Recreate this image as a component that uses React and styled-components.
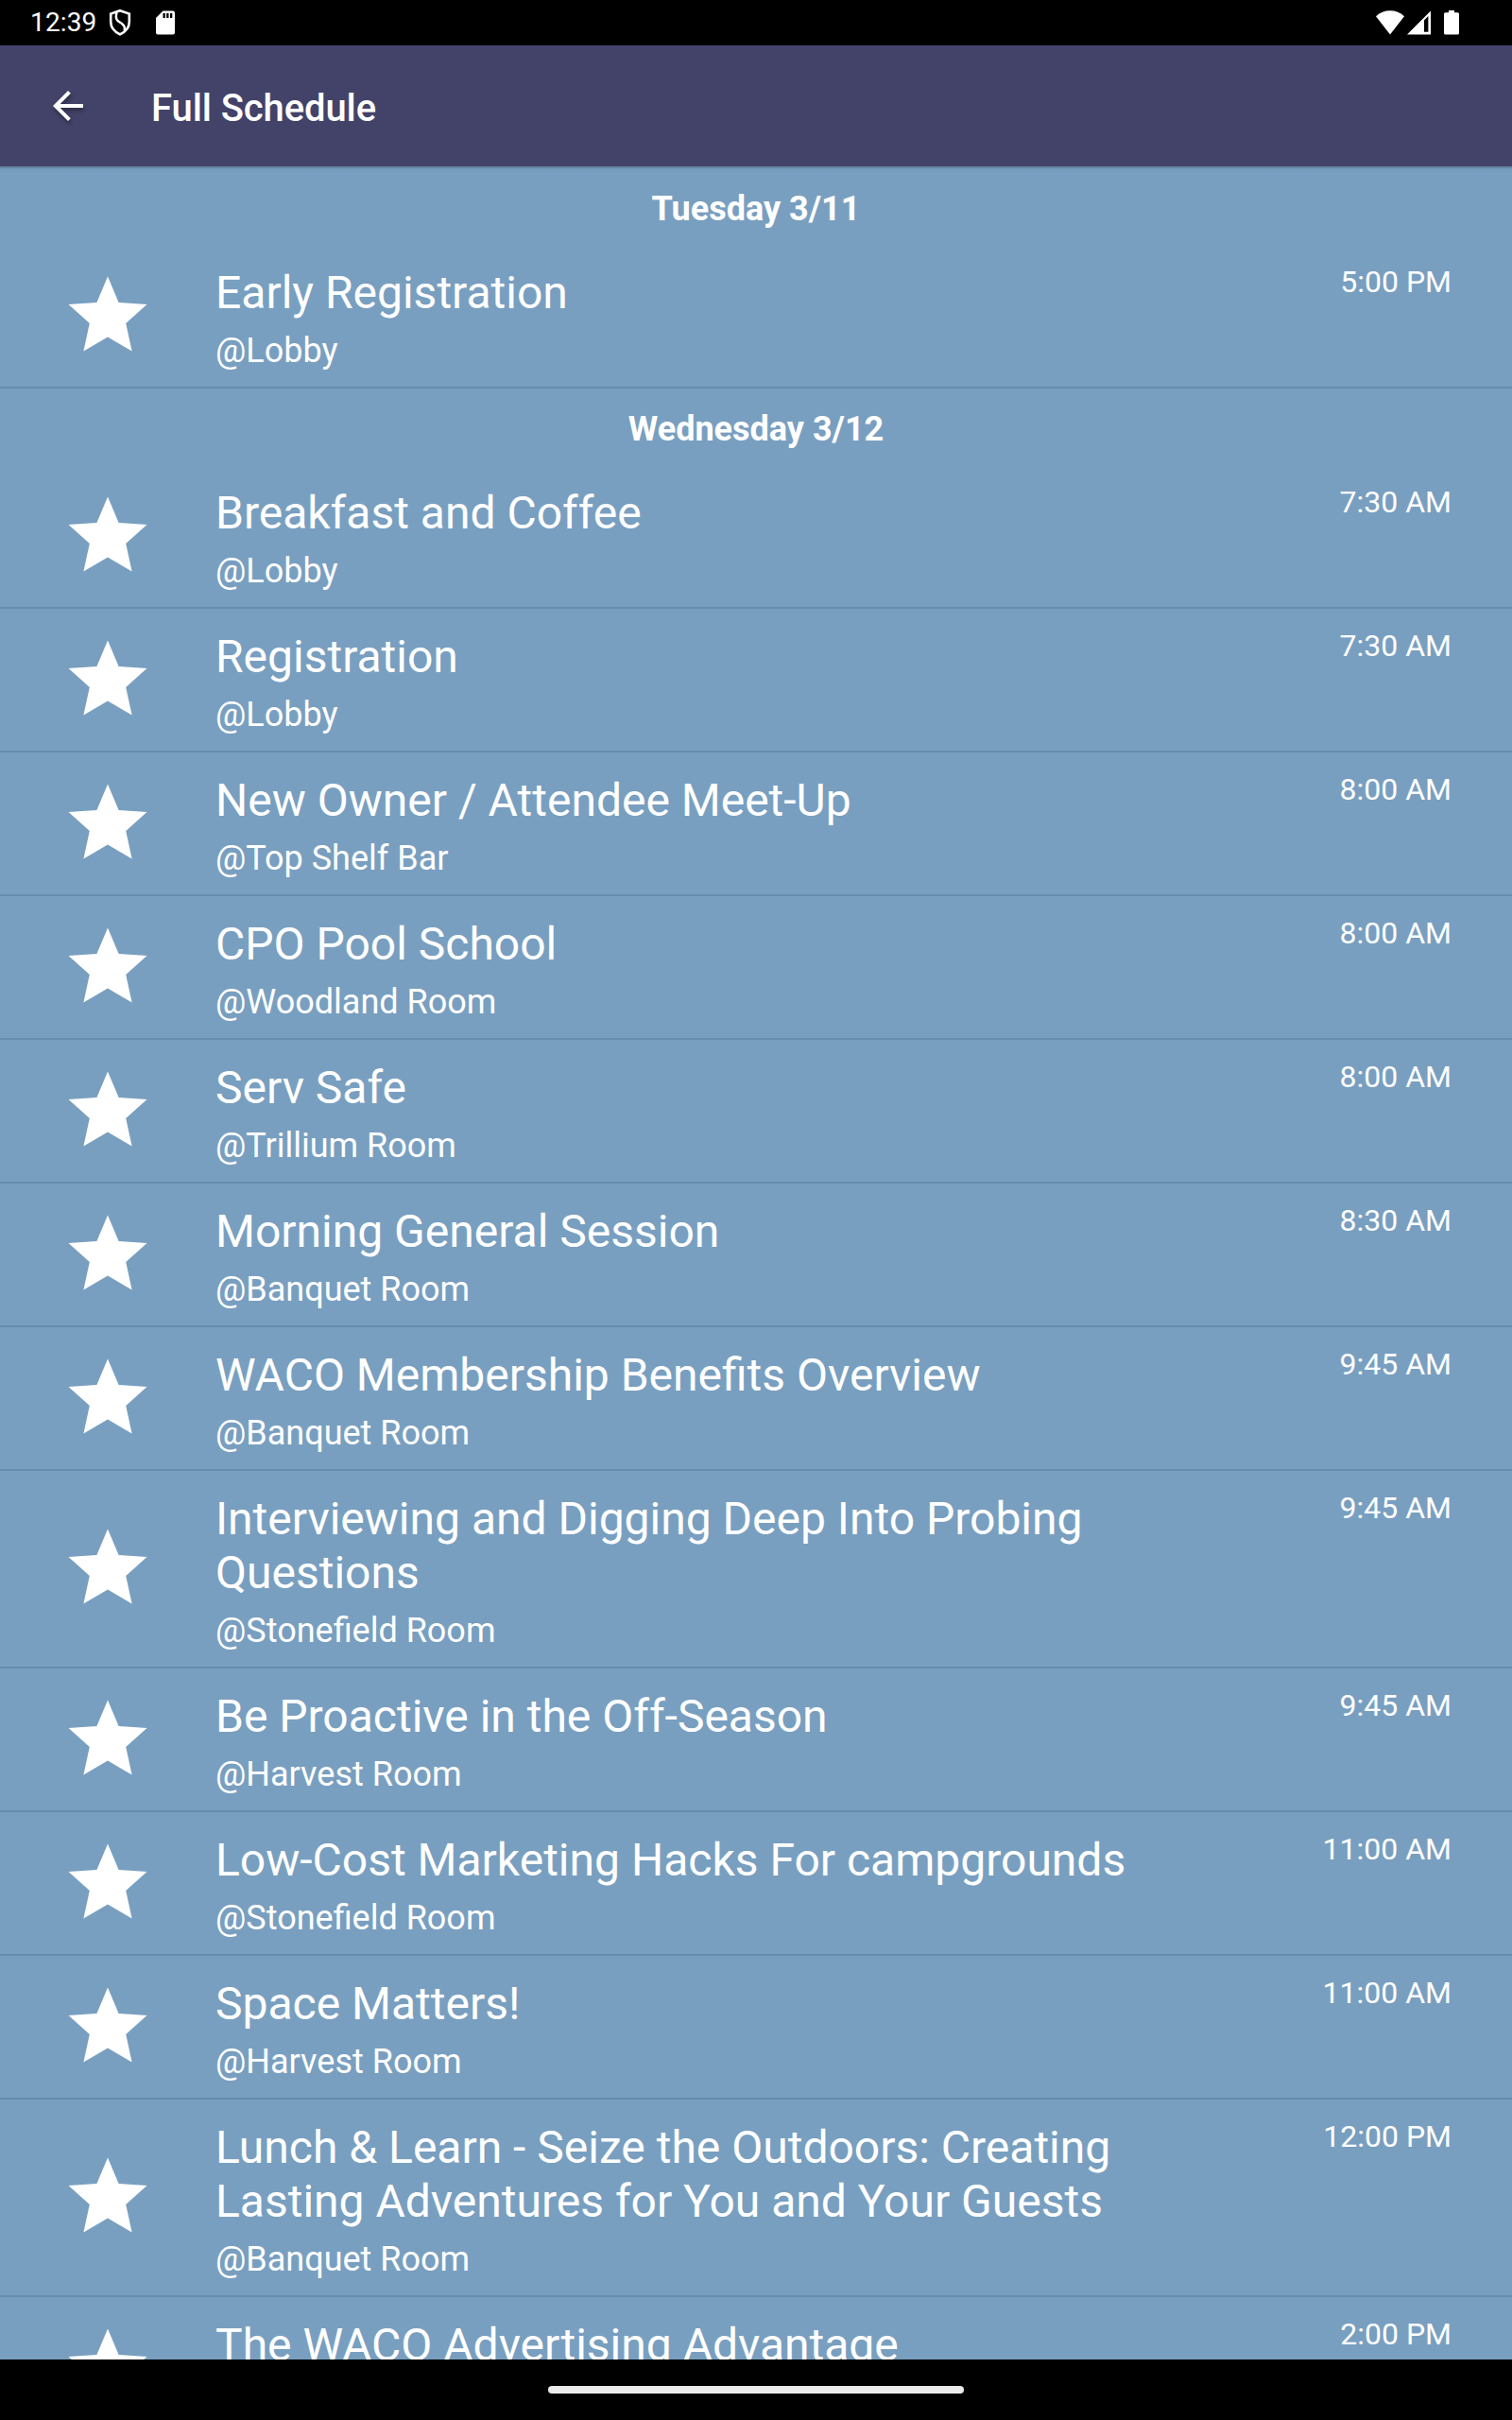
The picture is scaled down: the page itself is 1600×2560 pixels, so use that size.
import React from "react";
import styled, { createGlobalStyle } from "styled-components";

const GlobalStyle = createGlobalStyle`
  body {
    margin: 0;
    background: #000;
    font-family: Roboto, "Liberation Sans", sans-serif;
    color: #fff;
  }
`;

const Screen = styled.div`
  display: flex;
  flex-direction: column;
  width: 1600px;
  height: 2560px;
  overflow: hidden;
`;

const StatusBar = styled.div`
  display: flex;
  align-items: center;
  flex: none;
  box-sizing: border-box;
  height: 48px;
  padding: 0 56px 0 32px;
  background: #000;
`;

const Clock = styled.span`
  width: 82px;
  font-size: 28px;
  letter-spacing: 0.15px;
  line-height: 48px;
  white-space: nowrap;
`;

const StatusIcon = styled.svg`
  flex: none;
  display: block;
  margin-left: ${(props) => props.$gap || 0}px;
`;

const Spacer = styled.div`
  flex: 1;
`;

const AppBar = styled.header`
  display: flex;
  align-items: center;
  flex: none;
  box-sizing: border-box;
  height: 128px;
  padding-left: 48px;
  background: #43436a;
`;

const BackButton = styled.button`
  width: 48px;
  height: 48px;
  padding: 0;
  border: 0;
  background: none;

  & > svg {
    display: block;
    filter: drop-shadow(1px 3px 2px rgba(0, 0, 0, 0.4));
  }
`;

const PageTitle = styled.h1`
  margin: 0 0 0 64px;
  padding-top: 5px;
  font-size: 40px;
  font-weight: 500;
  letter-spacing: -0.1px;
  line-height: 48px;
`;

const Schedule = styled.main`
  flex: 1;
  min-height: 0;
  overflow: hidden;
  background: linear-gradient(#6386a3 2px, #7398b7 2px, #799fc0 6px);
  padding-top: 2px;
`;

const DayTitle = styled.h2`
  margin: 0;
  height: 81px;
  font-size: 36px;
  font-weight: 700;
  line-height: 86px;
  text-align: center;
`;

const Row = styled.div`
  display: flex;
  align-items: flex-start;
  padding: 20px 64px 16px 72px;
  border-bottom: 2px solid #678cae;
`;

const Star = styled.svg`
  flex: none;
  align-self: center;
  display: block;
  width: 84px;
  height: 80px;
  margin-top: -9px;
`;

const Details = styled.div`
  width: 1040px;
  margin-left: 72px;
  padding-top: 2px;
`;

const EventName = styled.div`
  font-size: 48px;
  line-height: 57px;
`;

const Location = styled.div`
  margin-top: 12px;
  font-size: 36px;
  line-height: 43px;
`;

const Time = styled.div`
  margin-left: auto;
  font-size: 32px;
  line-height: 38px;
  white-space: nowrap;
`;

const NavBar = styled.div`
  display: flex;
  align-items: center;
  justify-content: center;
  flex: none;
  height: 64px;
  background: #000;
`;

const HomeHandle = styled.div`
  width: 440px;
  height: 8px;
  border-radius: 4px;
  background: #ebebeb;
`;

const days = [
  {
    title: "Tuesday 3/11",
    events: [{ name: "Early Registration", place: "@Lobby", time: "5:00 PM" }],
  },
  {
    title: "Wednesday 3/12",
    events: [
      { name: "Breakfast and Coffee", place: "@Lobby", time: "7:30 AM" },
      { name: "Registration", place: "@Lobby", time: "7:30 AM" },
      { name: "New Owner / Attendee Meet-Up", place: "@Top Shelf Bar", time: "8:00 AM" },
      { name: "CPO Pool School", place: "@Woodland Room", time: "8:00 AM" },
      { name: "Serv Safe", place: "@Trillium Room", time: "8:00 AM" },
      { name: "Morning General Session", place: "@Banquet Room", time: "8:30 AM" },
      { name: "WACO Membership Benefits Overview", place: "@Banquet Room", time: "9:45 AM" },
      {
        name: "Interviewing and Digging Deep Into Probing Questions",
        place: "@Stonefield Room",
        time: "9:45 AM",
      },
      { name: "Be Proactive in the Off-Season", place: "@Harvest Room", time: "9:45 AM" },
      { name: "Low-Cost Marketing Hacks For campgrounds", place: "@Stonefield Room", time: "11:00 AM" },
      { name: "Space Matters!", place: "@Harvest Room", time: "11:00 AM" },
      {
        name: "Lunch & Learn - Seize the Outdoors: Creating Lasting Adventures for You and Your Guests",
        place: "@Banquet Room",
        time: "12:00 PM",
      },
      { name: "The WACO Advertising Advantage", place: "@Banquet Room", time: "2:00 PM" },
    ],
  },
];

function ScheduleRow({ event }) {
  return (
    <Row>
      <Star viewBox="0 0 84 80">
        <path
          d="M42 0.5L53.6 28L83.5 30L61.2 50L67.6 79.5L42 64.5L16.4 79.5L22.8 50L0.5 30L30.4 28Z"
          fill="#fff"
        />
      </Star>
      <Details>
        <EventName>{event.name}</EventName>
        <Location>{event.place}</Location>
      </Details>
      <Time>{event.time}</Time>
    </Row>
  );
}

function App() {
  return (
    <Screen>
      <GlobalStyle />
      <StatusBar>
        <Clock>12:39</Clock>
        <StatusIcon width="26" height="30" viewBox="0 0 26 30">
          <path
            d="M13 2.2L22.8 5.6V14C22.8 20 18.5 24.8 13 27.4C7.5 24.8 3.2 20 3.2 14V5.6Z"
            fill="none"
            stroke="#fff"
            strokeWidth="2.6"
          />
          <path
            d="M9.5 4C7 13.5 12 13.5 15.5 16.5C18 18.5 18.5 20.5 17.5 23.5"
            fill="none"
            stroke="#fff"
            strokeWidth="2.4"
          />
        </StatusIcon>
        <StatusIcon $gap={25} width="20" height="26" viewBox="0 0 20 26">
          <path
            d="M7.5 0.5H18Q20 0.5 20 2.5V23.5Q20 25.5 18 25.5H2Q0 25.5 0 23.5V8Z"
            fill="#fff"
          />
          <path d="M7.5 3H9.8V8H7.5ZM11.2 3H13.5V8H11.2ZM15 3H17.3V8H15Z" fill="#000" />
        </StatusIcon>
        <Spacer />
        <StatusIcon width="30" height="26" viewBox="0 0 30 26">
          <path d="M0 6.2Q6.5 0.3 15 0.3T30 6.2L15 25.5Z" fill="#fff" />
        </StatusIcon>
        <StatusIcon $gap={3} width="25" height="26" viewBox="0 0 25 26">
          <path d="M25 0.5V25.5H0ZM22.4 6L18 10.4V22.8H22.4Z" fill="#fff" fillRule="evenodd" />
        </StatusIcon>
        <StatusIcon $gap={14} width="16" height="26" viewBox="0 0 16 26">
          <path
            d="M5 0H11V2.2H14.5Q16 2.2 16 3.7V24Q16 25.5 14.5 25.5H1.5Q0 25.5 0 24V3.7Q0 2.2 1.5 2.2H5Z"
            fill="#fff"
          />
        </StatusIcon>
      </StatusBar>
      <AppBar>
        <BackButton aria-label="Back">
          <svg width="48" height="48" viewBox="0 0 24 24" fill="#fff">
            <path d="M20 11H7.83l5.59-5.59L12 4l-8 8 8 8 1.41-1.41L7.83 13H20v-2z" />
          </svg>
        </BackButton>
        <PageTitle>Full Schedule</PageTitle>
      </AppBar>
      <Schedule>
        {days.map((day) => (
          <section key={day.title}>
            <DayTitle>{day.title}</DayTitle>
            {day.events.map((event) => (
              <ScheduleRow key={event.name} event={event} />
            ))}
          </section>
        ))}
      </Schedule>
      <NavBar>
        <HomeHandle />
      </NavBar>
    </Screen>
  );
}

export default App;
